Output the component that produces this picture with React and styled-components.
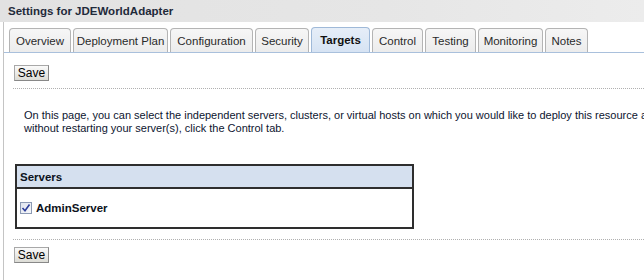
import React from "react";
import styled, { createGlobalStyle } from "styled-components";

const Global = createGlobalStyle`
  html, body { margin: 0; padding: 0; background: #fff; }
  body { font-family: "Liberation Sans", Arial, sans-serif; }
`;

const Page = styled.div`
  width: 644px;
  height: 280px;
  overflow: hidden;
  background: #fff;
`;

const Header = styled.div`
  height: 22px;
  display: flex;
  align-items: center;
  padding-left: 8px;
  background: linear-gradient(90deg, #e2e2e2 0%, #e6e6e6 60%, #ececec 100%);
  font-size: 11.5px;
  font-weight: bold;
  color: #1f2a3a;
`;

const Body = styled.div`
  margin-left: 3px;
  border-left: 1px solid #c4c4c4;
  height: 258px;
  display: flex;
  flex-direction: column;
`;

const TabBar = styled.div`
  display: flex;
  align-items: flex-end;
  gap: 2px;
  margin-top: 5px;
  padding-left: 5px;
  height: 25px;
  border-bottom: 1px solid #a9c0dc;
`;

const Tab = styled.div`
  box-sizing: border-box;
  width: ${(p) => p.$w}px;
  height: ${(p) => (p.$active ? 25 : 24)}px;
  display: flex;
  align-items: center;
  justify-content: center;
  padding-top: ${(p) => (p.$active ? 0 : 1)}px;
  border: 1px solid ${(p) => (p.$active ? "#9fb9d8" : "#b4b4b4")};
  border-bottom: none;
  border-radius: 4px 4px 0 0;
  background: ${(p) =>
    p.$active
      ? "linear-gradient(#e6eef8, #d6e3f3)"
      : "linear-gradient(#f6f6f6, #ececec)"};
  font-size: 11.5px;
  font-weight: ${(p) => (p.$active ? "bold" : "normal")};
  color: ${(p) => (p.$active ? "#111" : "#2a2a2a")};
  white-space: nowrap;
`;

const SaveButton = styled.button`
  box-sizing: border-box;
  align-self: flex-start;
  margin: ${(p) => p.$mt}px 0 0 10px;
  width: 35px;
  height: 16px;
  padding: 0;
  font-family: "Liberation Sans", Arial, sans-serif;
  font-size: 12px;
  color: #000;
  line-height: 14px;
  background: linear-gradient(#fafafa, #dcdcd6);
  border: 1px solid #a8a8a8;
  border-right-color: #888;
  border-bottom-color: #888;
  border-radius: 0;
`;

const Dotted = styled.div`
  margin: ${(p) => p.$mt}px 0 0 9px;
  border-top: 1px dotted #b0b0b0;
`;

const Paragraph = styled.p`
  margin: 20px 0 0 20px;
  font-size: 11px;
  line-height: 13px;
  color: #0d1530;
  white-space: nowrap;
`;

const ServersTable = styled.div`
  box-sizing: border-box;
  margin: 29px 0 0 11px;
  width: 399px;
  height: 65px;
  border: 2px solid #2e2e2e;
  display: flex;
  flex-direction: column;
`;

const TableHead = styled.div`
  height: 21px;
  display: flex;
  align-items: center;
  padding-left: 3px;
  background: #d5e0ef;
  border-bottom: 2px solid #2e2e2e;
  font-size: 11.5px;
  font-weight: bold;
  color: #0c1220;
`;

const TableRow = styled.div`
  flex: 1;
  display: flex;
  align-items: center;
  gap: 4px;
  padding-left: 3px;
  font-size: 11.5px;
  font-weight: bold;
  color: #0c1220;
`;

const Check = styled.span`
  box-sizing: border-box;
  width: 12px;
  height: 12px;
  border: 1px solid #8c9ab4;
  background: linear-gradient(135deg, #dfe4ee, #f6f7fa);
  display: inline-flex;
  align-items: center;
  justify-content: center;
`;

const tabs = [
  ["Overview", 62],
  ["Deployment Plan", 95],
  ["Configuration", 83],
  ["Security", 54],
  ["Targets", 59, true],
  ["Control", 51],
  ["Testing", 51],
  ["Monitoring", 65],
  ["Notes", 43],
];

export default function App() {
  return (
    <Page>
      <Global />
      <Header>Settings for JDEWorldAdapter</Header>
      <Body>
        <TabBar>
          {tabs.map(([label, w, active]) => (
            <Tab key={label} $w={w} $active={active}>
              {label}
            </Tab>
          ))}
        </TabBar>
        <SaveButton $mt={12}>Save</SaveButton>
        <Dotted $mt={7} />
        <Paragraph>
          On this page, you can select the independent servers, clusters, or virtual hosts on which you would like to deploy this resource adapter. To start or stop the deployment
          <br />
          without restarting your server(s), click the Control tab.
        </Paragraph>
        <ServersTable>
          <TableHead>Servers</TableHead>
          <TableRow>
            <Check>
              <svg width="10" height="10" viewBox="0 0 10 10">
                <path d="M1.5 5 L4 7.8 L8.5 1.5" fill="none" stroke="#2b3c9a" strokeWidth="1.6" />
              </svg>
            </Check>
            AdminServer
          </TableRow>
        </ServersTable>
        <Dotted $mt={10} />
        <SaveButton $mt={7}>Save</SaveButton>
      </Body>
    </Page>
  );
}
